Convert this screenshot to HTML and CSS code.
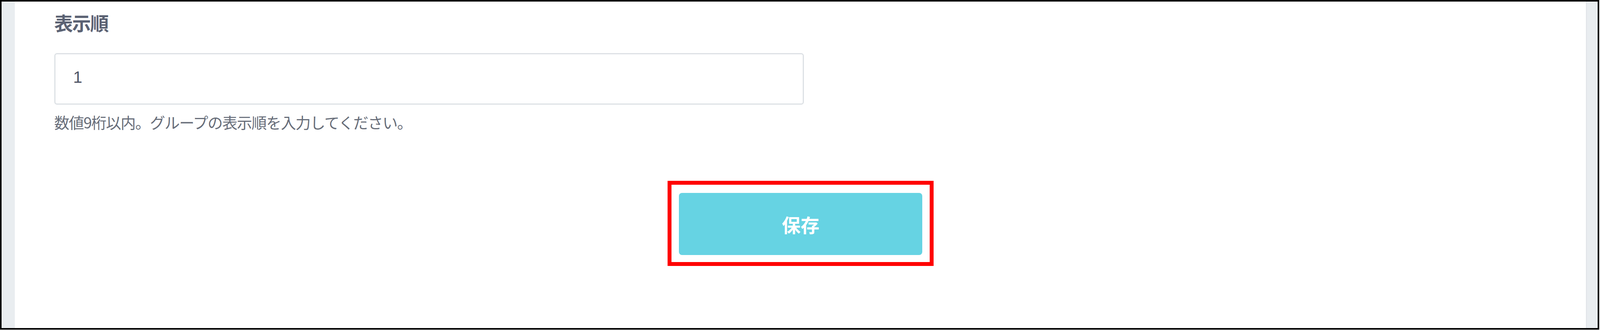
FILE: index.html
```html
<!DOCTYPE html>
<html lang="ja">
<head>
<meta charset="utf-8">
<title>表示順</title>
<link rel="stylesheet" href="styles.css">
</head>
<body>
<div class="frame">
  <div class="gutter gutter-left"></div>
  <main class="content">
    <section class="field">
      <h2 class="field-label">表示順</h2>
      <div class="input-box"><span class="input-value">1</span></div>
      <p class="field-help">数値9桁以内。グループの表示順を入力してください。</p>
    </section>
    <div class="actions">
      <div class="highlight">
        <button class="btn-save" type="button">保存</button>
      </div>
    </div>
  </main>
  <div class="gutter gutter-right"></div>
</div>
</body>
</html>
```

FILE: styles.css
```css
* { box-sizing: border-box; }

:root {
  --u: calc(100vw / 4408);
}

html, body {
  margin: 0;
  padding: 0;
  background: #ffffff;
  overflow: hidden;
}

body {
  font-family: "Liberation Sans", "Noto Sans CJK JP", sans-serif;
  padding: 0 calc(var(--u) * 2) 1px 0;
}

.frame {
  width: 100%;
  height: calc(100vh - 1px);
  border: 4px solid #000000;
  display: flex;
  background: #ffffff;
}

.gutter {
  background: #e9edf0;
  flex: none;
}

.gutter-left { width: calc(var(--u) * 37); }

.gutter-right {
  width: calc(var(--u) * 32);
  box-shadow: inset 3px 0 2px -1px #dfe3e6;
}

.content {
  flex: 1;
  min-width: 0;
  background: #ffffff;
  padding-top: 29px;
  display: flex;
  flex-direction: column;
}

.field {
  display: flex;
  flex-direction: column;
  margin-left: calc(var(--u) * 108);
}

.field-label {
  margin: 0;
  font-size: 48px;
  line-height: 48px;
  font-weight: 700;
  letter-spacing: -2px;
  color: #5b6273;
  font-family: "Noto Sans CJK JP", sans-serif;
}

.input-box {
  margin-top: 55px;
  width: calc(var(--u) * 2066);
  height: 132px;
  border: 3px solid #dde1e5;
  border-radius: 7px;
  display: flex;
  align-items: center;
  padding-left: calc(var(--u) * 49);
}

.input-value {
  font-size: 42px;
  color: #4f5566;
  line-height: 1;
  margin-top: -8px;
}

.field-help {
  margin: 25px 0 0;
  font-size: 39px;
  line-height: 39px;
  letter-spacing: -1.5px;
  color: #676d79;
  font-family: "Noto Sans CJK JP", sans-serif;
}

.actions {
  margin-top: 131px;
  display: flex;
  justify-content: center;
}

.highlight {
  border: 10px solid #ff0000;
  padding: 21px calc(var(--u) * 20) 18px;
}

.btn-save {
  display: block;
  width: calc(var(--u) * 671);
  height: 159px;
  border: none;
  border-radius: 8px;
  background: #66d3e3;
  color: #ffffff;
  font-family: "Noto Sans CJK JP", sans-serif;
  font-size: 48px;
  font-weight: 700;
  padding: 0;
  cursor: pointer;
}
```
